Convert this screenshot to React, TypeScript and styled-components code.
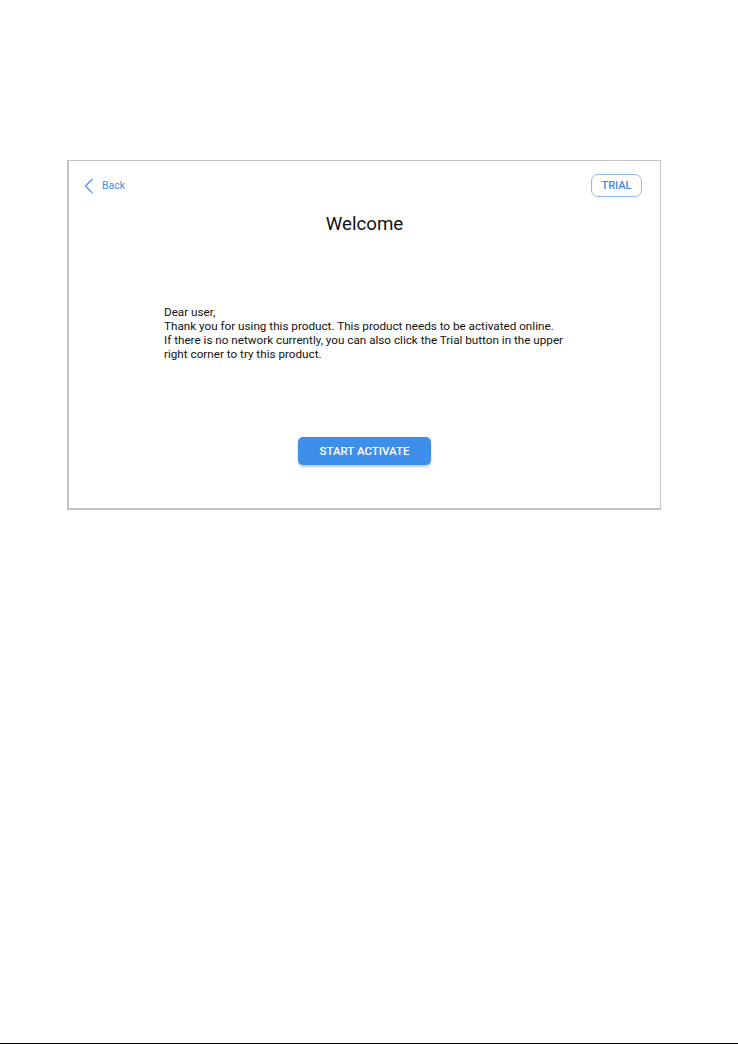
import React from "react";
import styled, { createGlobalStyle } from "styled-components";

const GlobalStyle = createGlobalStyle`
  html, body {
    margin: 0;
    padding: 0;
    background: #ffffff;
    font-family: Roboto, "Liberation Sans", Arial, sans-serif;
  }
`;

const Page = styled.div`
  /* Full window, frame sits near the top */
  height: 1044px;
  display: flex;
  flex-direction: column;
  box-sizing: border-box;
  padding: 160px 0 0 67px;
`;

const Frame = styled.div`
  width: 594px;
  height: 350px;
  box-sizing: border-box;
  border: 1px solid #c4c4c4;
  border-left-width: 2px;
  border-bottom-width: 2px;
  display: flex;
  flex-direction: column;
  padding: 13px 18px 0 18px;
`;

const Header = styled.div`
  display: flex;
  align-items: center;
  justify-content: space-between;
  height: 23px;
`;

const BackLink = styled.button`
  display: flex;
  align-items: center;
  gap: 8px;
  margin-left: -3px;
  border: none;
  background: none;
  padding: 0;
  color: #3d8ce9;
  font-family: inherit;
  font-size: 10.5px;
  cursor: pointer;
`;

const TrialButton = styled.button`
  width: 51px;
  height: 23px;
  box-sizing: border-box;
  border: 1px solid #8cbaf1;
  border-radius: 7px;
  background: #ffffff;
  color: #3d8ce9;
  font-family: inherit;
  font-size: 11px;
  font-weight: 500;
  padding: 0;
  cursor: pointer;
`;

const Title = styled.h1`
  margin: 16px 0 0;
  text-align: center;
  font-size: 18.7px;
  line-height: 22px;
  font-weight: 400;
  color: #111111;
`;

const Message = styled.div`
  align-self: flex-start;
  width: 430px;
  margin: 70px 0 0 77px;
  font-size: 11.7px;
  line-height: 14px;
  color: #111111;
`;

const ActivateButton = styled.button`
  align-self: center;
  margin-top: 76px;
  width: 133px;
  height: 28px;
  border: none;
  border-radius: 5px;
  background: #3d8fea;
  box-shadow: 0 2px 2px rgba(0, 0, 0, 0.22);
  color: #ffffff;
  font-family: inherit;
  font-size: 11.5px;
  font-weight: 500;
  padding: 0;
  cursor: pointer;
`;

const BottomEdge = styled.div`
  margin-top: auto;
  margin-left: -67px;
  height: 1px;
  background: #000000;
`;

const Chevron = () => (
  <svg width="10" height="16" viewBox="0 0 10 16" fill="none">
    <path d="M8.5 0.8 L1.5 8 L8.5 15.2" stroke="#3d8ce9" strokeWidth="1.2" />
  </svg>
);

const App = () => {
  return (
    <>
      <GlobalStyle />
      <Page>
        <Frame>
          <Header>
            <BackLink>
              <Chevron />
              Back
            </BackLink>
            <TrialButton>TRIAL</TrialButton>
          </Header>
          <Title>Welcome</Title>
          <Message>
            Dear user,
            <br />
            Thank you for using this product. This product needs to be activated online.
            <br />
            If there is no network currently, you can also click the Trial button in the upper
            <br />
            right corner to try this product.
          </Message>
          <ActivateButton>START ACTIVATE</ActivateButton>
        </Frame>
        <BottomEdge />
      </Page>
    </>
  );
};

export default App;
